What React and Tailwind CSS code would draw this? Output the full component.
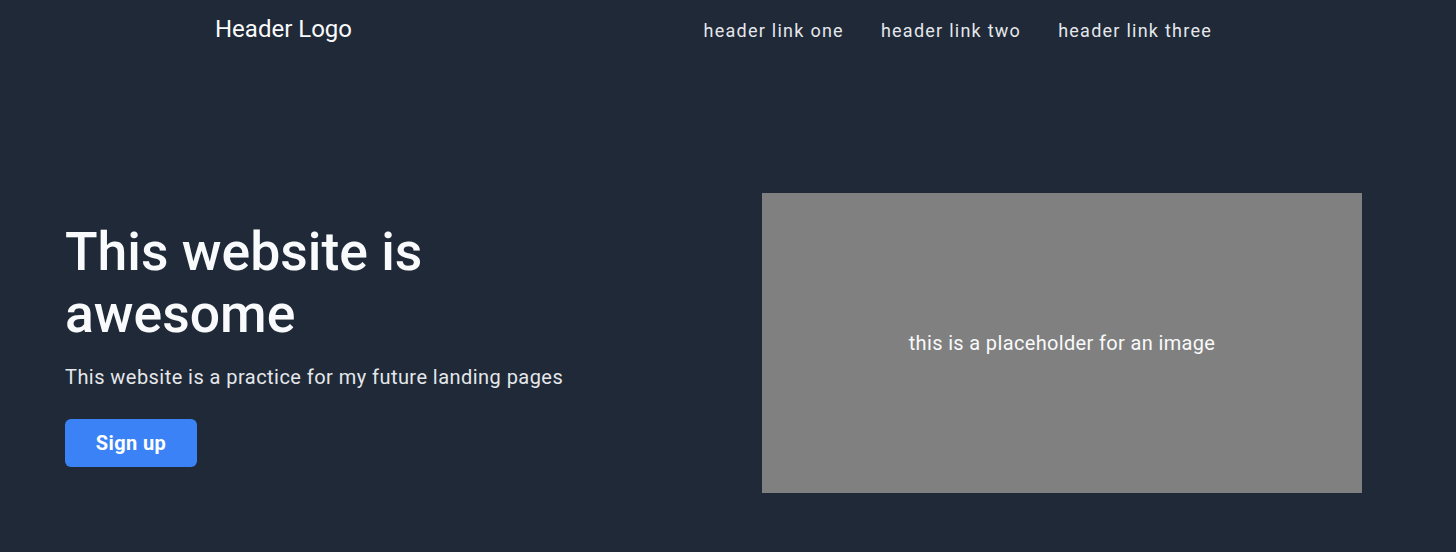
export default function App() {
  return (
    <div className="min-h-screen w-full bg-[#1f2937] text-[#f9fafb]" style={{ fontFamily: "Roboto, 'Noto Sans', sans-serif" }}>
      <header className="flex h-[58px] items-center justify-between pl-[215px] pr-[244px]">
        <div className="text-2xl text-[#f9fafb]">Header Logo</div>
        <nav className="flex gap-[37px] pt-[3px] text-lg tracking-[1.25px] text-[#e5e7eb]">
          <a href="#">header link one</a>
          <a href="#">header link two</a>
          <a href="#">header link three</a>
        </nav>
      </header>
      <main className="mt-[135px] flex items-center justify-between pl-[65px] pr-[94px]">
        <div className="flex flex-col items-start pt-[2px]">
          <h1 className="text-[53.5px] font-medium leading-[62px] text-[#f9fafb]">
            This website is
            <br />
            awesome
          </h1>
          <p className="mt-[18px] text-xl tracking-[0.45px] text-[#e5e7eb]">This website is a practice for my future landing pages</p>
          <button className="mt-[28px] flex h-[48px] w-[132px] items-center justify-center rounded-md bg-[#3b82f6] text-xl font-bold tracking-[0.4px] text-white">
            Sign up
          </button>
        </div>
        <div className="flex h-[300px] w-[600px] items-center justify-center bg-[#808080] text-xl tracking-[0.35px] text-[#f9fafb]">
          this is a placeholder for an image
        </div>
      </main>
    </div>
  );
}
